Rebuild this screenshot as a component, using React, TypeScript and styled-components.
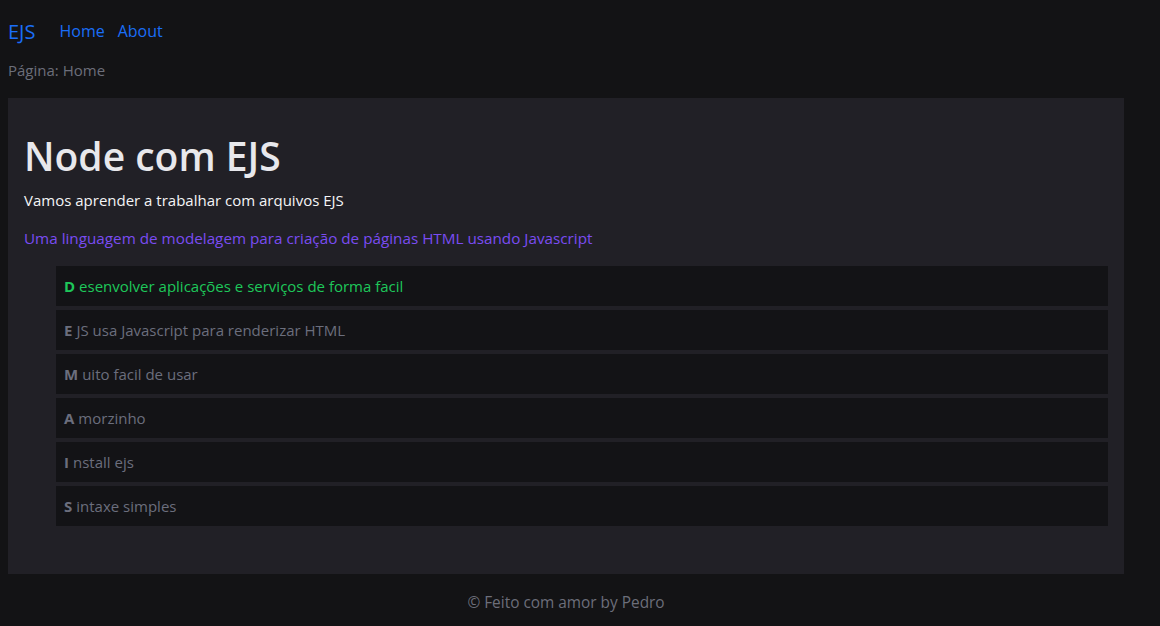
import React from "react";
import styled, { createGlobalStyle } from "styled-components";

const Global = createGlobalStyle`
  html, body { margin: 0; padding: 0; }
  body {
    background: #131315;
    font-family: "Open Sans", "Noto Sans", sans-serif;
    font-size: 16px;
    color: #e4e4e8;
    width: 1160px;
    height: 626px;
    overflow: hidden;
  }
`;

const Page = styled.div`
  padding: 8px 0 0 8px;
  width: 1116px;
`;

const Nav = styled.nav`
  display: flex;
  align-items: center;
  height: 46px;
`;

const Brand = styled.a`
  color: #1a6ef7;
  font-size: 20px;
  text-decoration: none;
  margin-right: 24px;
`;

const NavLink = styled.a`
  color: #1a6ef7;
  font-size: 16px;
  text-decoration: none;
  margin-right: 13px;
`;

const PageLabel = styled.p`
  margin: 5px 0 0;
  color: #6c6e7a;
  font-size: 15px;
  line-height: 22px;
  height: 39px;
`;

const Card = styled.main`
  background: #212026;
  padding: 32px 16px 48px;
  height: 476px;
  box-sizing: border-box;
`;

const Title = styled.h1`
  margin: 0;
  font-size: 39px;
  font-weight: 600;
  line-height: 52px;
  color: #e8e8ec;
`;

const Lead = styled.p`
  margin: 6px 0 0;
  font-size: 15px;
  line-height: 24px;
  color: #f4f4f6;
`;

const Accent = styled.p`
  margin: 14px 0 0;
  font-size: 15.25px;
  line-height: 24px;
  color: #7a4cf2;
`;

const List = styled.ul`
  list-style: none;
  margin: 16px 0 0;
  padding: 0 0 0 32px;
  display: flex;
  flex-direction: column;
  gap: 4px;
`;

const Item = styled.li<{ $active?: boolean }>`
  background: #131316;
  height: 40px;
  display: flex;
  align-items: center;
  padding: 0 8px;
  font-size: 15px;
  color: ${(p) => (p.$active ? "#1ec75a" : "#6b6e7d")};
`;

const Initial = styled.b`
  font-weight: 700;
  margin-right: 4px;
`;

const Footer = styled.footer`
  text-align: center;
  color: #6c6e7a;
  font-size: 15.4px;
  line-height: 58px;
  width: 1132px;
`;

const items = [
  ["D", "esenvolver aplicações e serviços de forma facil"],
  ["E", "JS usa Javascript para renderizar HTML"],
  ["M", "uito facil de usar"],
  ["A", "morzinho"],
  ["I", "nstall ejs"],
  ["S", "intaxe simples"],
];

export default function App() {
  return (
    <>
      <Global />
      <Page>
        <Nav>
          <Brand href="#">EJS</Brand>
          <NavLink href="#">Home</NavLink>
          <NavLink href="#">About</NavLink>
        </Nav>
        <PageLabel>Página: Home</PageLabel>
        <Card>
          <Title>Node com EJS</Title>
          <Lead>Vamos aprender a trabalhar com arquivos EJS</Lead>
          <Accent>Uma linguagem de modelagem para criação de páginas HTML usando Javascript</Accent>
          <List>
            {items.map(([l, rest], i) => (
              <Item key={l} $active={i === 0}>
                <Initial>{l}</Initial>
                {rest}
              </Item>
            ))}
          </List>
        </Card>
      </Page>
      <Footer>© Feito com amor by Pedro</Footer>
    </>
  );
}
